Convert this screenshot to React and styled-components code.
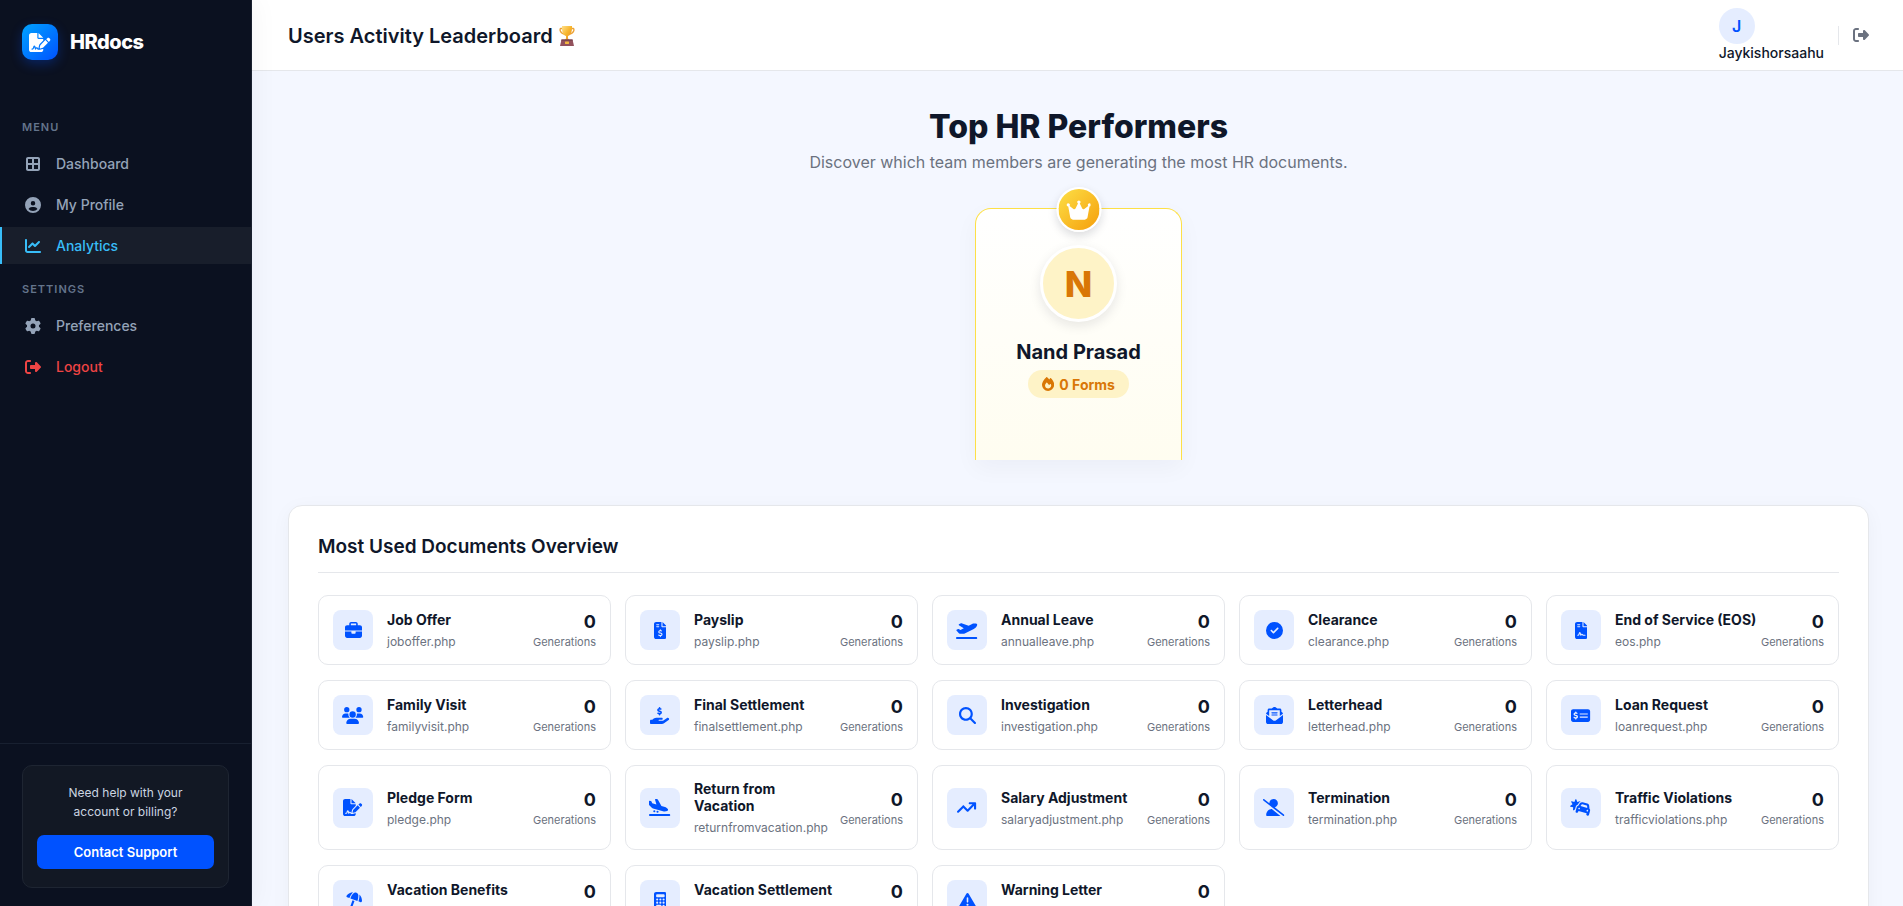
import React from "react";
import styled, { createGlobalStyle, css } from "styled-components";
import { IconContext } from "react-icons";
import {
  FaFileSignature, FaBorderAll, FaCircleUser, FaChartLine, FaGear, FaRightFromBracket,
  FaCrown, FaBriefcase, FaFileInvoiceDollar, FaPlaneDeparture, FaCircleCheck, FaFileContract,
  FaUsers, FaHandHoldingDollar, FaMagnifyingGlass, FaEnvelopeOpenText, FaMoneyCheckDollar,
  FaPlaneArrival, FaArrowTrendUp, FaUserSlash, FaCarBurst, FaUmbrellaBeach, FaCalculator,
  FaTriangleExclamation, FaFire,
} from "react-icons/fa6";

const GlobalStyle = createGlobalStyle`
  *, *::before, *::after { box-sizing: border-box; }
  html, body { height: 100%; }
  body {
    margin: 0;
    background: #f4f7ff;
    color: #0f172a;
    font-family: Inter, "Liberation Sans", sans-serif;
    overflow: hidden;
  }
  h1, h2, h3, p, ul { margin: 0; padding: 0; }
  ul { list-style: none; }
  a { color: inherit; text-decoration: none; }
  svg { display: block; }
`;

const Shell = styled.div`
  display: flex;
  height: 100vh;
`;

const Sidebar = styled.aside`
  display: flex;
  flex-direction: column;
  flex: 0 0 252px;
  background: #0b1120;
  border-right: 1px solid #1a2130;
  box-shadow: 4px 0 24px rgba(15, 23, 42, 0.04);
  z-index: 1;
`;

const Brand = styled.a`
  display: flex;
  align-items: center;
  gap: 12px;
  padding: 23px 22px 24px;
  color: #fff;
  font-size: 20px;
  font-weight: 800;
  line-height: 38px;
  letter-spacing: -0.5px;
`;

const BrandMark = styled.span`
  display: grid;
  place-items: center;
  width: 36px;
  height: 36px;
  border-radius: 10px;
  background: linear-gradient(135deg, #00a3ff, #0052ff);
  box-shadow: 0 4px 12px rgba(0, 82, 255, 0.3);
  svg { height: 19px; width: auto; }
`;

const Nav = styled.nav`
  flex: 1;
  padding-top: 31px;
`;

const NavLabel = styled.h3`
  padding: 4px 22px 11px;
  color: #64748b;
  font-size: 11px;
  font-weight: 600;
  line-height: 14px;
  letter-spacing: 1px;
  text-transform: uppercase;
  ul + & { padding-top: 14px; }
`;

const navTones = {
  idle: css`color: #94a3b8;`,
  active: css`
    color: #38bdf8;
    background: #181e2b;
    border-left-color: #38bdf8;
  `,
  danger: css`color: #ef4444;`,
};

const NavItem = styled.a`
  display: flex;
  align-items: center;
  gap: 14px;
  height: 37px;
  margin-bottom: 4px;
  padding: 0 22px;
  border-left: 2px solid transparent;
  font-size: 14px;
  font-weight: 500;
  ${(p) => navTones[p.$tone]}
`;

const NavIcon = styled.span`
  display: grid;
  place-items: center;
  width: 18px;
  svg { height: 16px; width: auto; }
`;

const SidebarFooter = styled.div`
  padding: 21px 22px 18px;
  border-top: 1px solid #182030;
`;

const HelpCard = styled.div`
  padding: 17px 14px 18px;
  border: 1px solid #1e2532;
  border-radius: 10px;
  background: #121824;
  text-align: center;
`;

const HelpText = styled.p`
  margin-bottom: 14px;
  padding: 0 24px;
  color: #cbd5e1;
  font-size: 12px;
  line-height: 19px;
`;

const HelpButton = styled.button`
  width: 100%;
  height: 34px;
  border: 0;
  border-radius: 7px;
  background: #0052ff;
  color: #fff;
  font: 600 13px Inter, sans-serif;
`;

const Main = styled.div`
  flex: 1;
  min-width: 0;
  display: flex;
  flex-direction: column;
`;

const TopBar = styled.header`
  display: flex;
  flex: none;
  align-items: center;
  justify-content: space-between;
  height: 71px;
  padding: 0 34px 0 36px;
  background: #fff;
  border-bottom: 1px solid #e5e7eb;
`;

const PageTitle = styled.h1`
  display: flex;
  align-items: center;
  gap: 4px;
  padding-top: 2px;
  font-size: 20px;
  font-weight: 600;
  line-height: 24px;
`;

const Account = styled.div`
  display: flex;
  align-items: center;
  gap: 14px;
`;

const Profile = styled.a`
  display: flex;
  flex-direction: column;
  font-size: 14px;
  font-weight: 500;
  line-height: 18px;
`;

const ProfileInitial = styled.span`
  display: grid;
  place-items: center;
  width: 36px;
  height: 36px;
  border-radius: 50%;
  background: #e5edff;
  color: #0052ff;
  font-size: 16px;
  font-weight: 600;
`;

const SignOut = styled.button`
  display: flex;
  align-items: center;
  height: 19px;
  padding: 0 0 0 14px;
  border: 0;
  border-left: 1px solid #e5e7eb;
  background: none;
  color: #6b7280;
  svg { height: 16px; width: auto; }
`;

const Content = styled.main`
  flex: 1;
  min-height: 0;
  overflow: hidden;
  padding: 36px 34px 36px 36px;
`;

const Intro = styled.section`
  text-align: center;
`;

const IntroTitle = styled.h2`
  font-size: 32px;
  font-weight: 800;
  line-height: 40px;
`;

const IntroText = styled.p`
  margin-top: 3px;
  color: #6b7280;
  font-size: 16px;
  line-height: 24px;
`;

const Podium = styled.section`
  display: flex;
  justify-content: center;
  margin: 34px 0 45px;
`;

const PodiumCard = styled.article`
  position: relative;
  display: flex;
  flex-direction: column;
  align-items: center;
  width: 207px;
  height: 252px;
  padding-top: 36px;
  border: 1px solid #fde047;
  border-bottom: 0;
  border-radius: 16px 16px 0 0;
  background: linear-gradient(180deg, #fff, #fffdf0);
  box-shadow: 0 8px 24px rgba(15, 23, 42, 0.04);
`;

const CrownBadge = styled.span`
  position: absolute;
  top: -22px;
  left: 50%;
  transform: translateX(-50%);
  display: grid;
  place-items: center;
  width: 45px;
  height: 45px;
  border: 2px solid #fff;
  border-radius: 50%;
  background: linear-gradient(135deg, #fde047, #f59e0b);
  box-shadow: 0 4px 10px rgba(15, 23, 42, 0.15);
  color: #fff;
  svg { height: 22px; width: auto; }
`;

const Avatar = styled.span`
  display: grid;
  place-items: center;
  width: 77px;
  height: 77px;
  border: 3px solid #fff;
  border-radius: 50%;
  background: #fef3c7;
  box-shadow: 0 4px 12px rgba(15, 23, 42, 0.1);
  color: #d97706;
  font-size: 36px;
  font-weight: 800;
`;

const PerformerName = styled.h3`
  margin: 18px 0 6px;
  font-size: 20px;
  font-weight: 700;
  line-height: 24px;
`;

const FormsPill = styled.span`
  display: flex;
  align-items: center;
  gap: 5px;
  height: 28px;
  padding: 0 14px;
  border-radius: 14px;
  background: #fef3c7;
  color: #d97706;
  font-size: 14px;
  font-weight: 700;
  svg { height: 14px; width: auto; }
`;

const Overview = styled.section`
  padding: 29px;
  border: 1px solid #e5e7eb;
  border-radius: 14px;
  background: #fff;
  box-shadow: 0 4px 20px rgba(15, 23, 42, 0.04);
`;

const OverviewTitle = styled.h2`
  margin-bottom: 22px;
  padding-bottom: 13px;
  border-bottom: 1px solid #e5e7eb;
  font-size: 19px;
  font-weight: 600;
  line-height: 24px;
`;

const DocGrid = styled.ul`
  display: grid;
  grid-template-columns: repeat(auto-fill, minmax(280px, 1fr));
  gap: 15px 14px;
`;

const DocCard = styled.li`
  display: flex;
  align-items: center;
  padding: 14px;
  border: 1px solid #e5e7eb;
  border-radius: 10px;
`;

const DocIcon = styled.span`
  display: grid;
  place-items: center;
  flex: none;
  width: 40px;
  height: 40px;
  margin-right: 14px;
  border-radius: 8px;
  background: #e5edff;
  color: #0052ff;
  svg { height: 17px; width: auto; }
`;

const DocText = styled.div`
  flex: 1;
  padding-right: 3px;
`;

const DocName = styled.h3`
  margin-bottom: 6px;
  font-size: 14px;
  font-weight: 700;
  line-height: 17px;
`;

const DocFile = styled.p`
  color: #6b7280;
  font-size: 12px;
  line-height: 15px;
`;

const DocCount = styled.div`
  flex: none;
  text-align: right;
`;

const CountValue = styled.strong`
  display: block;
  font-size: 18px;
  font-weight: 700;
  line-height: 24px;
`;

const CountLabel = styled.span`
  display: block;
  color: #6b7280;
  font-size: 11px;
  line-height: 16px;
`;

const Trophy = () => (
  <svg width="20" height="22" viewBox="0 0 20 22" role="img" aria-label="Trophy">
    <defs>
      <linearGradient id="cup" x1="0" y1="0" x2="1" y2="1">
        <stop offset="0" stopColor="#ffe08a" />
        <stop offset="0.5" stopColor="#f7b52c" />
        <stop offset="1" stopColor="#e8862a" />
      </linearGradient>
    </defs>
    <path d="M6 3.500H3.800C2.400 3.500 2.800 8.500 7.200 9M14 3.500h2.200c1.400 0 1 5-3.400 5.500" fill="none" stroke="#eba338" strokeWidth="1.400" />
    <path d="M5 1h10c.2 5-.6 9-4 10v2.500l1.500 1.500h-5L9 13.500V11C5.600 10 4.800 6 5 1z" fill="url(#cup)" />
    <path d="M4.500 14.500h11l1.500 6.500H3z" fill="#93525d" />
    <path d="M4.500 14.500h11l.3 1.200H4.200z" fill="#75404d" />
    <rect x="8" y="16.500" width="4" height="2.400" rx=".4" fill="#f3b93f" />
  </svg>
);

const menu = [
  { label: "Dashboard", icon: FaBorderAll, tone: "idle" },
  { label: "My Profile", icon: FaCircleUser, tone: "idle" },
  { label: "Analytics", icon: FaChartLine, tone: "active" },
];

const settings = [
  { label: "Preferences", icon: FaGear, tone: "idle" },
  { label: "Logout", icon: FaRightFromBracket, tone: "danger" },
];

const documents = [
  ["Job Offer", "joboffer.php", FaBriefcase],
  ["Payslip", "payslip.php", FaFileInvoiceDollar],
  ["Annual Leave", "annualleave.php", FaPlaneDeparture],
  ["Clearance", "clearance.php", FaCircleCheck],
  ["End of Service (EOS)", "eos.php", FaFileContract],
  ["Family Visit", "familyvisit.php", FaUsers],
  ["Final Settlement", "finalsettlement.php", FaHandHoldingDollar],
  ["Investigation", "investigation.php", FaMagnifyingGlass],
  ["Letterhead", "letterhead.php", FaEnvelopeOpenText],
  ["Loan Request", "loanrequest.php", FaMoneyCheckDollar],
  ["Pledge Form", "pledge.php", FaFileSignature],
  ["Return from Vacation", "returnfromvacation.php", FaPlaneArrival],
  ["Salary Adjustment", "salaryadjustment.php", FaArrowTrendUp],
  ["Termination", "termination.php", FaUserSlash],
  ["Traffic Violations", "trafficviolations.php", FaCarBurst],
  ["Vacation Benefits", "vacationbenefits.php", FaUmbrellaBeach],
  ["Vacation Settlement", "vacationsettlement.php", FaCalculator],
  ["Warning Letter", "warningletter.php", FaTriangleExclamation],
];

// Lets each icon keep the proportions of its own viewBox.
const iconDefaults = { size: "auto" };

const NavList = ({ items }) => (
  <ul>
    {items.map(({ label, icon: Icon, tone }) => (
      <li key={label}>
        <NavItem href="#" $tone={tone}>
          <NavIcon><Icon /></NavIcon>
          {label}
        </NavItem>
      </li>
    ))}
  </ul>
);

export default function App() {
  return (
    <IconContext.Provider value={iconDefaults}>
      <GlobalStyle />
      <Shell>
        <Sidebar>
          <Brand href="#">
            <BrandMark><FaFileSignature /></BrandMark>
            HRdocs
          </Brand>
          <Nav>
            <NavLabel>Menu</NavLabel>
            <NavList items={menu} />
            <NavLabel>Settings</NavLabel>
            <NavList items={settings} />
          </Nav>
          <SidebarFooter>
            <HelpCard>
              <HelpText>Need help with your account or billing?</HelpText>
              <HelpButton type="button">Contact Support</HelpButton>
            </HelpCard>
          </SidebarFooter>
        </Sidebar>
        <Main>
          <TopBar>
            <PageTitle>Users Activity Leaderboard <Trophy /></PageTitle>
            <Account>
              <Profile href="#">
                <ProfileInitial>J</ProfileInitial>
                Jaykishorsaahu
              </Profile>
              <SignOut type="button" aria-label="Sign out"><FaRightFromBracket /></SignOut>
            </Account>
          </TopBar>
          <Content>
            <Intro>
              <IntroTitle>Top HR Performers</IntroTitle>
              <IntroText>Discover which team members are generating the most HR documents.</IntroText>
            </Intro>
            <Podium>
              <PodiumCard>
                <CrownBadge><FaCrown /></CrownBadge>
                <Avatar>N</Avatar>
                <PerformerName>Nand Prasad</PerformerName>
                <FormsPill><FaFire />0 Forms</FormsPill>
              </PodiumCard>
            </Podium>
            <Overview>
              <OverviewTitle>Most Used Documents Overview</OverviewTitle>
              <DocGrid>
                {documents.map(([name, file, Icon]) => (
                  <DocCard key={file}>
                    <DocIcon><Icon /></DocIcon>
                    <DocText>
                      <DocName>{name}</DocName>
                      <DocFile>{file}</DocFile>
                    </DocText>
                    <DocCount>
                      <CountValue>0</CountValue>
                      <CountLabel>Generations</CountLabel>
                    </DocCount>
                  </DocCard>
                ))}
              </DocGrid>
            </Overview>
          </Content>
        </Main>
      </Shell>
    </IconContext.Provider>
  );
}
